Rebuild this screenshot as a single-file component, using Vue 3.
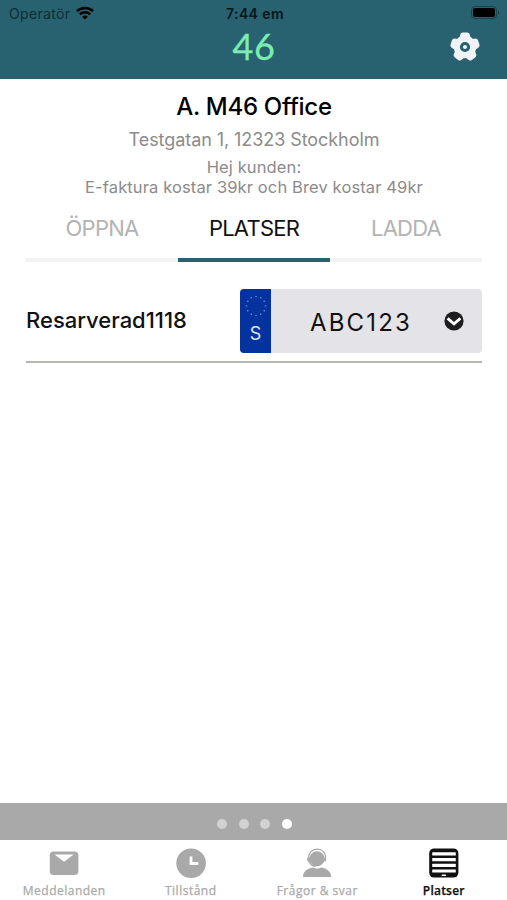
<template>
  <div class="screen">
    <header class="header">
      <div class="status-bar">
        <div class="carrier">
          <span class="carrier-name">Operatör</span>
          <svg class="wifi" viewBox="0 0 18 14" width="18" height="14">
            <path d="M1 5.2a11.4 11.4 0 0 1 16 0" />
            <path d="M3.9 8.3a7.2 7.2 0 0 1 10.2 0" />
            <path class="wifi-dot" d="M9 13.6 6.1 10.8a4.2 4.2 0 0 1 5.8 0z" />
          </svg>
        </div>
        <span class="time">7:44 em</span>
        <svg class="battery" viewBox="0 0 30 14" width="30" height="14">
          <rect class="battery-frame" x="0.5" y="0.5" width="25" height="12" rx="3.5" />
          <rect x="2" y="2" width="22" height="9" rx="2" />
          <path class="battery-tip" d="M27 4.5q2 2 0 4z" />
        </svg>
      </div>
      <div class="title-bar">
        <span class="logo">46</span>
        <button class="settings" aria-label="Inställningar">
          <svg viewBox="-15 -15 30 30" width="30" height="30">
            <g v-for="n in 5" :key="n" :transform="`rotate(${(n - 1) * 72})`">
              <path d="M-8 0-5-11.5q.4-3 3-3h4q2.6 0 3 3L8 0z" />
            </g>
            <circle r="11.2" />
            <circle class="gear-hole" r="3.6" />
          </svg>
        </button>
      </div>
    </header>

    <main class="content">
      <h1 class="name">A. M46 Office</h1>
      <p class="address">Testgatan 1, 12323 Stockholm</p>
      <p class="notice">Hej kunden:<br />E-faktura kostar 39kr och Brev kostar 49kr</p>

      <div class="tabs">
        <button
          v-for="tab in tabs"
          :key="tab"
          class="tab"
          :class="{ active: tab === activeTab }"
          @click="activeTab = tab"
        >{{ tab }}</button>
      </div>

      <div class="place">
        <span class="place-name">Resarverad1118</span>
        <div class="plate">
          <div class="plate-country">
            <svg viewBox="-11 -11 22 22" width="22" height="22">
              <circle v-for="n in 12" :key="n" cy="-9.5" r="0.8" :transform="`rotate(${n * 30})`" />
            </svg>
            <span class="country-code">S</span>
          </div>
          <span class="plate-number">ABC123</span>
          <svg class="chevron" viewBox="0 0 20 20" width="20" height="20">
            <circle cx="10" cy="10" r="9.6" />
            <path d="m3.6 7.4 6.4 5.4 6.4-5.4" />
          </svg>
        </div>
      </div>
    </main>

    <div class="pager">
      <span v-for="n in 4" :key="n" class="dot" :class="{ current: n === page }"></span>
    </div>

    <nav class="nav">
      <a class="nav-item">
        <svg viewBox="0 0 30 30" width="30" height="30">
          <rect x="0.8" y="3.5" width="28.6" height="23.5" rx="3.8" />
          <path class="cut" d="M5.5 6.6h19.2L15.1 13.8z" />
        </svg>
        <span class="label">Meddelanden</span>
      </a>
      <a class="nav-item">
        <svg viewBox="0 0 30 30" width="30" height="30">
          <circle cx="15.1" cy="15.2" r="14.8" />
          <path class="clock-hands" d="M15 8.5v7h7.3" />
        </svg>
        <span class="label">Tillstånd</span>
      </a>
      <a class="nav-item">
        <svg viewBox="0 0 30 30" width="30" height="30">
          <circle cx="15" cy="10.8" r="7.5" />
          <path class="headset" d="M6.8 11.5C4.8-2.2 25.2-2.2 23.4 11M6.8 12.5q1.2 5 7 6" />
          <ellipse cx="6.6" cy="11.4" rx="1.5" ry="2.3" />
          <ellipse cx="23.1" cy="11.4" rx="1.1" ry="2.2" />
          <path d="M1 29c0-5.8 5-8.6 10-9.4q4 2.3 8.3 0C24.5 20.7 29.2 23.2 29.2 29z" />
        </svg>
        <span class="label">Frågor &amp; svar</span>
      </a>
      <a class="nav-item selected">
        <svg viewBox="0 0 30 30" width="30" height="30">
          <rect x="0.2" y="0.4" width="29.2" height="29.2" rx="5" />
          <rect v-for="y in slats" :key="y" class="cut" x="3.2" :y="y" width="23.6" height="3.2" rx="0.5" />
          <rect class="cut" x="12.6" y="26.6" width="4.5" height="1.5" rx="0.7" />
        </svg>
        <span class="label">Platser</span>
      </a>
    </nav>
  </div>
</template>

<script setup>
import { ref } from 'vue';

const tabs = ['ÖPPNA', 'PLATSER', 'LADDA'];
const activeTab = ref('PLATSER');
const page = ref(4);

// Vertical offsets of the slats in the "Platser" icon
const slats = [4.2, 10, 15.8, 21.4];
</script>

<style>
body {
  margin: 0;
  background: #fff;
}
</style>

<style scoped>
.screen {
  display: flex;
  flex-direction: column;
  width: 507px;
  height: 900px;
  overflow: hidden;
  background: #fff;
  font-family: Inter, "Liberation Sans", sans-serif;
}

button {
  margin: 0;
  padding: 0;
  border: 0;
  background: none;
  font: inherit;
}

svg {
  display: block;
  flex: none;
}

.header {
  height: 79px;
  flex: none;
  background: #28616f;
}

.status-bar {
  display: grid;
  grid-template-columns: 1fr auto 1fr;
  align-items: center;
  height: 28px;
  padding: 0 6px 2px 9px;
  box-sizing: border-box;
  color: #06161b;
}

.carrier {
  display: flex;
  align-items: center;
  gap: 6px;
}

.carrier-name {
  font-size: 14px;
  letter-spacing: 0.33px;
  color: #0c2d38;
}

.wifi path {
  fill: none;
  stroke: #000;
  stroke-width: 2.5;
}

.wifi .wifi-dot {
  fill: #000;
  stroke: none;
}

.time {
  font-size: 14px;
  font-weight: 600;
  letter-spacing: 0.4px;
}

.battery {
  justify-self: end;
}

.battery-frame {
  fill: none;
  stroke: #1a434e;
}

.battery-tip {
  fill: #12333c;
}

.title-bar {
  display: grid;
  grid-template-columns: 1fr auto 1fr;
  align-items: center;
  height: 38px;
  padding: 0 27px;
}

.logo {
  grid-column: 2;
  padding: 0 0 2px 1px;
  font-family: Lato, sans-serif;
  font-size: 36px;
  line-height: 36px;
  letter-spacing: 0.5px;
  color: #7bedb0;
  -webkit-text-stroke: 0.3px #7bedb0;
}

.settings {
  justify-self: end;
}

.settings svg {
  fill: #f0f3f5;
}

.settings .gear-hole {
  fill: #f0f3f5;
  stroke: #28616f;
  stroke-width: 3;
}

.content {
  flex: 1;
  padding: 13px 25px 0 26px;
  text-align: center;
}

.name {
  margin: 0;
  font-size: 24px;
  font-weight: 500;
  line-height: 30px;
  letter-spacing: -0.3px;
  color: #000;
}

.address {
  margin: 6px 0 0;
  font-size: 18px;
  line-height: 24px;
  letter-spacing: -0.07px;
  color: #8b8b8b;
}

.notice {
  margin: 5px 0 0;
  font-size: 16.5px;
  line-height: 20px;
  letter-spacing: 0.12px;
  color: #8b8b8b;
}

.tabs {
  display: flex;
  margin-top: 15px;
}

.tab {
  flex: 1;
  height: 50px;
  padding-bottom: 14px;
  border-bottom: 4px solid #f3f3f3;
  font-size: 22px;
  letter-spacing: -0.75px;
  color: #b3b3b3;
}

.tab.active {
  border-bottom-color: #28616f;
  color: #111;
}

.place {
  display: flex;
  align-items: center;
  justify-content: space-between;
  height: 64px;
  margin-top: 27px;
  padding-bottom: 8px;
  border-bottom: 2px solid #b7b6b0;
}

.place-name {
  padding-bottom: 3px;
  font-size: 22px;
  font-weight: 500;
  color: #111;
}

.plate {
  display: flex;
  align-items: center;
  width: 242px;
  height: 64px;
  border-radius: 4px;
  overflow: hidden;
  background: #e4e3e8;
}

.plate-country {
  display: flex;
  flex-direction: column;
  align-items: center;
  width: 31px;
  height: 58px;
  padding-top: 6px;
  background: #0433a0;
}

.plate-country svg {
  fill: #6d8bd0;
}

.country-code {
  margin-top: 6px;
  font-size: 18px;
  line-height: 22px;
  color: #dfe8ff;
}

.plate-number {
  flex: 1;
  padding: 3px 0 0 7px;
  font-size: 24px;
  letter-spacing: 2.15px;
  color: #111;
}

.chevron {
  margin-right: 18px;
  fill: #1d1d1f;
}

.chevron path {
  fill: none;
  stroke: #fff;
  stroke-width: 2.8;
}

.pager {
  display: flex;
  flex: none;
  justify-content: center;
  align-items: center;
  gap: 11.6px;
  height: 37px;
  padding: 5px 0 0 2px;
  box-sizing: border-box;
  background: #a9a9a9;
}

.dot {
  width: 10px;
  height: 10px;
  border-radius: 50%;
  background: #d2d2d2;
}

.dot.current {
  background: #fff;
}

.nav {
  display: flex;
  flex: none;
  height: 60px;
  padding-left: 1px;
  background: #fff;
}

.nav-item {
  display: flex;
  flex: 1;
  flex-direction: column;
  align-items: center;
  padding-top: 8px;
  color: #a9a9a9;
  fill: #a9a9a9;
}

.nav-item.selected {
  color: #111;
  fill: #111;
}

.nav-item .cut {
  fill: #fff;
}

.clock-hands {
  fill: none;
  stroke: #fff;
  stroke-width: 2.8;
}

.headset {
  fill: none;
  stroke: #a9a9a9;
  stroke-width: 1.2;
}

.label {
  margin-top: 5px;
  font-family: "Open Sans", "Noto Sans", sans-serif;
  font-size: 12px;
  font-weight: 500;
  line-height: 16px;
  letter-spacing: 0.5px;
  white-space: nowrap;
  -webkit-text-stroke: 0.25px currentColor;
}

.selected .label {
  font-weight: 600;
  letter-spacing: 0.2px;
}
</style>
